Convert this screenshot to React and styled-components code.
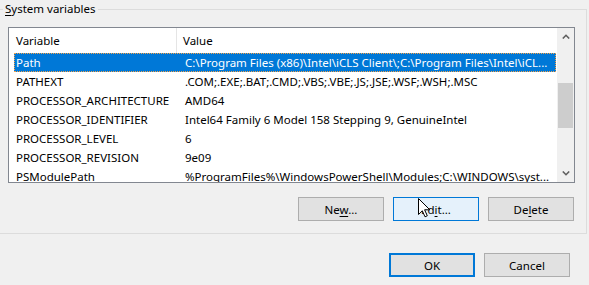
import React from "react";
import styled, { createGlobalStyle } from "styled-components";

const GlobalStyle = createGlobalStyle`
  html, body {
    margin: 0;
    padding: 0;
    background: #f0f0f0;
    overflow: hidden;
  }
  body {
    font-family: "Noto Sans", "Liberation Sans", sans-serif;
    font-size: 11.5px;
    color: #000;
  }
`;

const variables = [
  { name: "Path", value: "C:\\Program Files (x86)\\Intel\\iCLS Client\\;C:\\Program Files\\Intel\\iCL..." },
  { name: "PATHEXT", value: ".COM;.EXE;.BAT;.CMD;.VBS;.VBE;.JS;.JSE;.WSF;.WSH;.MSC" },
  { name: "PROCESSOR_ARCHITECTURE", value: "AMD64" },
  { name: "PROCESSOR_IDENTIFIER", value: "Intel64 Family 6 Model 158 Stepping 9, GenuineIntel" },
  { name: "PROCESSOR_LEVEL", value: "6" },
  { name: "PROCESSOR_REVISION", value: "9e09" },
  { name: "PSModulePath", value: "%ProgramFiles%\\WindowsPowerShell\\Modules;C:\\WINDOWS\\syst..." },
];

const Page = styled.div`
  width: 589px;
  height: 285px;
  padding-top: 9px;
  box-sizing: border-box;
`;

const Group = styled.div`
  position: relative;
  width: 591px;
  margin-left: -4px;
  box-sizing: border-box;
  border: 1px solid #dcdcdc;
  padding: 17px 11px 12px 11px;
`;

const GroupLabel = styled.span`
  position: absolute;
  left: 6px;
  top: -9px;
  padding: 0 2px;
  background: #f0f0f0;
  line-height: 16px;
`;

const Key = styled.span`
  text-decoration: underline;
  text-underline-offset: 2px;
`;

const ListBox = styled.div`
  display: flex;
  height: 156px;
  box-sizing: border-box;
  border: 1px solid #828790;
  background: #fff;
  overflow: hidden;
`;

const ListContent = styled.div`
  flex: 1;
  min-width: 0;
`;

const Header = styled.div`
  display: grid;
  grid-template-columns: 168px 1fr;
  height: 25px;
  align-items: center;
`;

const HeaderCell = styled.div`
  height: 100%;
  display: flex;
  align-items: center;
  padding-left: ${(p) => p.$pad}px;
  border-right: ${(p) => (p.$divider ? "1px solid #e5e5e5" : "none")};
`;

const Row = styled.div`
  display: grid;
  grid-template-columns: 164px 1fr;
  height: 19px;
  margin: 0 1px 0 5px;
  align-items: center;
  white-space: nowrap;
  background: ${(p) => (p.$selected ? "#0078d7" : "transparent")};
  color: ${(p) => (p.$selected ? "#fff" : "#000")};
  outline: ${(p) => (p.$selected ? "1px dotted #f5a34a" : "none")};
  outline-offset: -1px;
`;

const Cell = styled.div`
  padding-left: ${(p) => p.$pad}px;
  overflow: hidden;
`;

const ScrollBar = styled.div`
  width: 17px;
  display: flex;
  flex-direction: column;
  background: #f0f0f0;
`;

const ScrollButton = styled.div`
  height: 17px;
  display: flex;
  align-items: center;
  justify-content: center;
`;

const Track = styled.div`
  flex: 1;
  position: relative;
`;

const Thumb = styled.div`
  position: absolute;
  left: 1px;
  width: 15px;
  background: #cdcdcd;
`;

const ButtonRow = styled.div`
  display: flex;
  justify-content: flex-end;
  gap: ${(p) => p.$gap}px;
  margin-top: ${(p) => p.$top}px;
  margin-right: ${(p) => p.$right}px;
`;

const Button = styled.button`
  position: relative;
  width: 86px;
  height: 24px;
  box-sizing: border-box;
  padding: 0;
  font: inherit;
  color: #000;
  background: ${(p) => (p.$hover ? "#e5f1fb" : "#e1e1e1")};
  border: ${(p) =>
    p.$default ? "2px solid #0078d7" : p.$hover ? "1px solid #0078d7" : "1px solid #adadad"};
  border-radius: 0;
`;

const Cursor = styled.svg`
  position: absolute;
  left: 24px;
  top: 0;
  pointer-events: none;
`;

const Chevron = ({ up }) => (
  <svg width="8" height="5" viewBox="0 0 8 5">
    <path
      d={up ? "M0.8 4.5 L4 1.3 L7.2 4.5" : "M0.8 0.5 L4 3.7 L7.2 0.5"}
      fill="none"
      stroke="#606060"
      strokeWidth="1.6"
    />
  </svg>
);

export default function App() {
  return (
    <>
      <GlobalStyle />
      <Page>
        <Group>
          <GroupLabel>
            <Key>S</Key>ystem variables
          </GroupLabel>
          <ListBox>
            <ListContent>
              <Header>
                <HeaderCell $pad={7} $divider>Variable</HeaderCell>
                <HeaderCell $pad={6}>Value</HeaderCell>
              </Header>
              {variables.map((v, i) => (
                <Row key={v.name} $selected={i === 0}>
                  <Cell $pad={2}>{v.name}</Cell>
                  <Cell $pad={7}>{v.value}</Cell>
                </Row>
              ))}
            </ListContent>
            <ScrollBar>
              <ScrollButton>
                <Chevron up />
              </ScrollButton>
              <Track>
                <Thumb style={{ top: 38, height: 45 }} />
              </Track>
              <ScrollButton>
                <Chevron />
              </ScrollButton>
            </ScrollBar>
          </ListBox>
          <ButtonRow $gap={9} $top={14} $right={1}>
            <Button>
              Ne<Key>w</Key>...
            </Button>
            <Button $hover>
              Ed<Key>i</Key>t...
              <Cursor width="13" height="20" viewBox="0 0 13 20">
                <path
                  d="M0.5 0.5 L0.5 16.5 L4.3 12.8 L7 18.8 L9.3 17.8 L6.6 11.8 L11.8 11.8 Z"
                  fill="#fff"
                  stroke="#000"
                  strokeWidth="1"
                  strokeLinejoin="miter"
                />
              </Cursor>
            </Button>
            <Button>
              De<Key>l</Key>ete
            </Button>
          </ButtonRow>
        </Group>
        <ButtonRow $gap={9} $top={19} $right={19}>
          <Button $default>OK</Button>
          <Button>Cancel</Button>
        </ButtonRow>
      </Page>
    </>
  );
}
